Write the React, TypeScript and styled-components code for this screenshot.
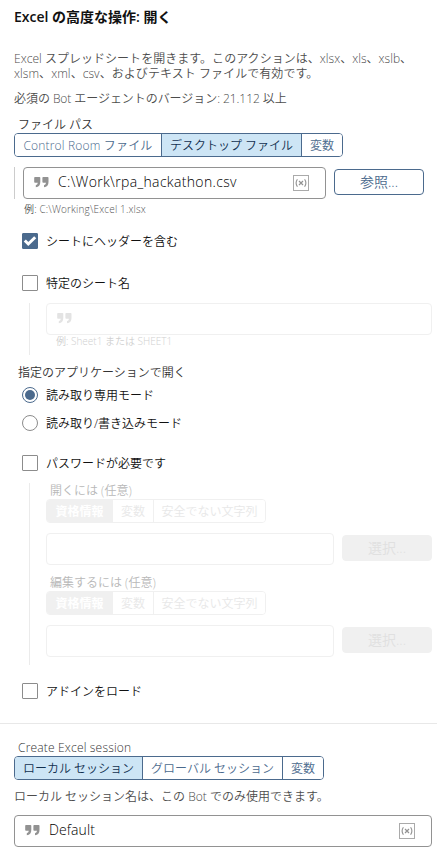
import React from "react";
import styled, { createGlobalStyle } from "styled-components";

const GlobalStyle = createGlobalStyle`
  * { box-sizing: border-box; }
  body {
    margin: 0;
    background: #fff;
    font-family: "Open Sans", "Noto Sans CJK JP", sans-serif;
    font-size: 12px;
    font-weight: 350;
    color: #333;
  }
`;

const Panel = styled.main`
  width: 437px;
  height: 851px;
  overflow: hidden;
  display: flex;
  flex-direction: column;
  background: #fff;
`;

const Text = styled.span<{ $track?: number }>`
  display: inline-block;
  white-space: nowrap;
  letter-spacing: ${(p) => p.$track ?? 0}px;
`;

const Title = styled.h1`
  margin: 7px 0 0 14px;
  height: 20px;
  line-height: 20px;
  font-size: 14px;
  font-weight: 600;
  color: #111;
`;

const Description = styled.div<{ $top: number }>`
  margin: ${(p) => p.$top}px 0 0 14px;
  line-height: 15px;
  color: #4c4c4c;
  display: flex;
  flex-direction: column;
  align-items: flex-start;
`;

const Label = styled.div<{ $top?: number; $left?: number }>`
  margin-top: ${(p) => p.$top ?? 0}px;
  margin-left: ${(p) => p.$left ?? 18}px;
  height: 16px;
  line-height: 16px;
  color: #333;
`;

const Segments = styled.div<{ $off?: boolean }>`
  display: flex;
  align-self: flex-start;
  width: max-content;
  height: 24px;
  border: 1px solid ${(p) => (p.$off ? "#f0f0f0" : "#4b6a8d")};
  border-radius: 4px;
  overflow: hidden;
`;

const Segment = styled.div<{ $w: number; $on?: boolean; $off?: boolean }>`
  width: ${(p) => p.$w}px;
  display: flex;
  align-items: center;
  justify-content: center;
  font-weight: ${(p) => (p.$on && p.$off ? 600 : 350)};
  color: ${(p) => (p.$off ? (p.$on ? "#fff" : "#e8e8e8") : p.$on ? "#12304f" : "#4b6a8d")};
  background: ${(p) => (p.$on ? (p.$off ? "#f0f0f0" : "#cde5f5") : "#fff")};
  &:not(:first-child) {
    border-left: 1px solid ${(p) => (p.$off ? "#f0f0f0" : "#4b6a8d")};
  }
`;

const Row = styled.div<{ $top: number; $left?: number }>`
  display: flex;
  align-items: flex-start;
  margin-top: ${(p) => p.$top}px;
  margin-left: ${(p) => p.$left ?? 0}px;
`;

const Field = styled.div<{ $w: number; $off?: boolean }>`
  width: ${(p) => p.$w}px;
  height: 32px;
  border: 1px solid ${(p) => (p.$off ? "#f0f0f0" : "#929292")};
  border-radius: 4px;
  display: flex;
  align-items: center;
  padding: 0 16px 0 10px;
  font-size: 14px;
  color: #000;
  svg:first-child { margin: 0 9px 2px 0; }
`;

const FieldValue = styled.span`
  flex: 1;
  padding-bottom: 3px;
  white-space: nowrap;
`;

const Button = styled.button<{ $off?: boolean }>`
  width: 90px;
  height: 26px;
  margin: 2px 0 0 8px;
  padding: 0;
  border: 1px solid ${(p) => (p.$off ? "#f0f0f0" : "#4b6a8d")};
  border-radius: 4px;
  background: ${(p) => (p.$off ? "#f0f0f0" : "#fff")};
  color: ${(p) => (p.$off ? "#e0e0e0" : "#4b6a8d")};
  font: inherit;
  font-size: 14px;
  line-height: 22px;
`;

const Guide = styled.div<{ $top?: number }>`
  margin: ${(p) => p.$top ?? 0}px 0 0 29px;
  padding-left: 16px;
  border-left: 1px solid #ebebeb;
  display: flex;
  flex-direction: column;
`;

const PathRow = styled.div`
  display: flex;
  height: 32px;
  margin: 10px 0 0 14px;
  padding-left: 8px;
  border-left: 1px solid #ccc;
`;

const Hint = styled.div<{ $left: number; $off?: boolean }>`
  margin-left: ${(p) => p.$left}px;
  height: 20px;
  line-height: ${(p) => (p.$off ? 13 : 21)}px;
  font-size: 10px;
  color: ${(p) => (p.$off ? "#d0d0d0" : "#555")};
`;

const Option = styled.label<{ $top: number }>`
  display: flex;
  align-items: center;
  gap: 8px;
  height: 16px;
  margin: ${(p) => p.$top}px 0 0 22px;
  line-height: 17px;
  color: #111;
`;

const Box = styled.span<{ $on?: boolean }>`
  width: 16px;
  height: 16px;
  display: flex;
  border: 1px solid ${(p) => (p.$on ? "#4b6a8d" : "#8c8c8c")};
  border-radius: 1px;
  background: ${(p) => (p.$on ? "#4b6a8d" : "#fff")};
`;

const Radio = styled.span<{ $on?: boolean }>`
  width: 16px;
  height: 16px;
  padding: 2px;
  border: 1px solid ${(p) => (p.$on ? "#4b6a8d" : "#8c8c8c")};
  border-radius: 50%;
  background: ${(p) => (p.$on ? "#4b6a8d" : "#fff")};
  background-clip: content-box;
`;

const Rule = styled.hr`
  width: 100%;
  height: 1px;
  margin: 24px 0 0;
  border: 0;
  background: #e8e8e8;
`;

const Quote = ({ color = "#929292" }: { color?: string }) => (
  <svg width="15" height="11" viewBox="0 0 15 11" fill={color}>
    <path d="M1 0H5.5Q6.3 0 6.3 .8V5Q6.3 9.8 1.8 10.3V8.2Q3.8 7.8 3.8 5.8H1Q.2 5.8 .2 5V.8Q.2 0 1 0Z" />
    <path d="M9.2 0H13.7Q14.5 0 14.5 .8V5Q14.5 9.8 10 10.3V8.2Q12 7.8 12 5.8H9.2Q8.4 5.8 8.4 5V.8Q8.4 0 9.2 0Z" />
  </svg>
);

const VariableIcon = () => (
  <svg width="16" height="16" viewBox="0 0 16 16" fill="none" stroke="#929292">
    <rect x=".5" y=".5" width="15" height="15" stroke="#aaa" />
    <path d="M4.4 4.3Q1.8 8 4.4 11.7M11.6 4.3Q14.2 8 11.6 11.7" strokeWidth="1.1" />
    <path d="M6 6L10 10M10 6L6 10" strokeWidth="1.2" />
  </svg>
);

const Check = () => (
  <svg width="14" height="14" viewBox="0 0 14 14" fill="none" stroke="#fff" strokeWidth="3">
    <path d="M1.8 6.5L5.3 10L12.2 3.2" />
  </svg>
);

const Credential = ({ label }: { label: string }) => (
  <>
    <Segments $off>
      <Segment $w={65} $on $off>資格情報</Segment>
      <Segment $w={41} $off>変数</Segment>
      <Segment $w={112} $off>安全でない文字列</Segment>
    </Segments>
    <Row $top={10}>
      <Field $w={288} $off aria-label={label} />
      <Button $off>選択...</Button>
    </Row>
  </>
);

const DisabledLabel = styled(Label)`
  color: #b8b8b8;
`;

export default function App() {
  return (
    <>
      <GlobalStyle />
      <Panel>
        <Title><Text>Excel の高度な操作: 開く</Text></Title>
        <Description $top={24}>
          <Text $track={0.03}>Excel スプレッドシートを開きます。このアクションは、xlsx、xls、xslb、</Text>
          <Text $track={0.06}>xlsm、xml、csv、およびテキスト ファイルで有効です。</Text>
        </Description>
        <Description $top={10}>
          <Text $track={-0.06}>必須の Bot エージェントのバージョン: 21.112 以上</Text>
        </Description>
        <Label $top={11}>ファイル パス</Label>
        <Row $top={0} $left={14}>
          <Segments>
            <Segment $w={146}><Text $track={0.18}>Control Room ファイル</Text></Segment>
            <Segment $w={140} $on><Text>デスクトップ ファイル</Text></Segment>
            <Segment $w={41}>変数</Segment>
          </Segments>
        </Row>
        <PathRow>
          <Field $w={303}>
            <Quote />
            <FieldValue><Text $track={0.34}>C:\Work\rpa_hackathon.csv</Text></FieldValue>
            <VariableIcon />
          </Field>
          <Button>参照...</Button>
        </PathRow>
        <Hint $left={24}><Text $track={0.16}>例: C:\Working\Excel 1.xlsx</Text></Hint>
        <Option $top={14}><Box $on><Check /></Box>シートにヘッダーを含む</Option>
        <Option $top={26}><Box />特定のシート名</Option>
        <Guide $top={12}>
          <Field $w={386} $off><Quote color="#e3e3e3" /></Field>
          <Hint $left={10} $off><Text>例: Sheet1 または SHEET1</Text></Hint>
        </Guide>
        <Label $top={10}>指定のアプリケーションで開く</Label>
        <Option $top={6}><Radio $on />読み取り専用モード</Option>
        <Option $top={12}><Radio /><Text>読み取り/書き込みモード</Text></Option>
        <Option $top={24}><Box />パスワードが必要です</Option>
        <Guide $top={12}>
          <DisabledLabel $left={4}><Text>開くには (任意)</Text></DisabledLabel>
          <Credential label="開くには (任意)" />
          <DisabledLabel $top={10} $left={4}><Text>編集するには (任意)</Text></DisabledLabel>
          <Credential label="編集するには (任意)" />
          <Row $top={8} />
        </Guide>
        <Option $top={18}><Box />アドインをロード</Option>
        <Rule />
        <Label $top={16}><Text $track={0.18}>Create Excel session</Text></Label>
        <Row $top={0} $left={14}>
          <Segments>
            <Segment $w={127} $on><Text>ローカル セッション</Text></Segment>
            <Segment $w={140}><Text>グローバル セッション</Text></Segment>
            <Segment $w={41}>変数</Segment>
          </Segments>
        </Row>
        <Description $top={9}>
          <Text>ローカル セッション名は、この Bot でのみ使用できます。</Text>
        </Description>
        <Row $top={11} $left={14}>
          <Field $w={418}>
            <Quote />
            <FieldValue><Text $track={0.1}>Default</Text></FieldValue>
            <VariableIcon />
          </Field>
        </Row>
      </Panel>
    </>
  );
}
